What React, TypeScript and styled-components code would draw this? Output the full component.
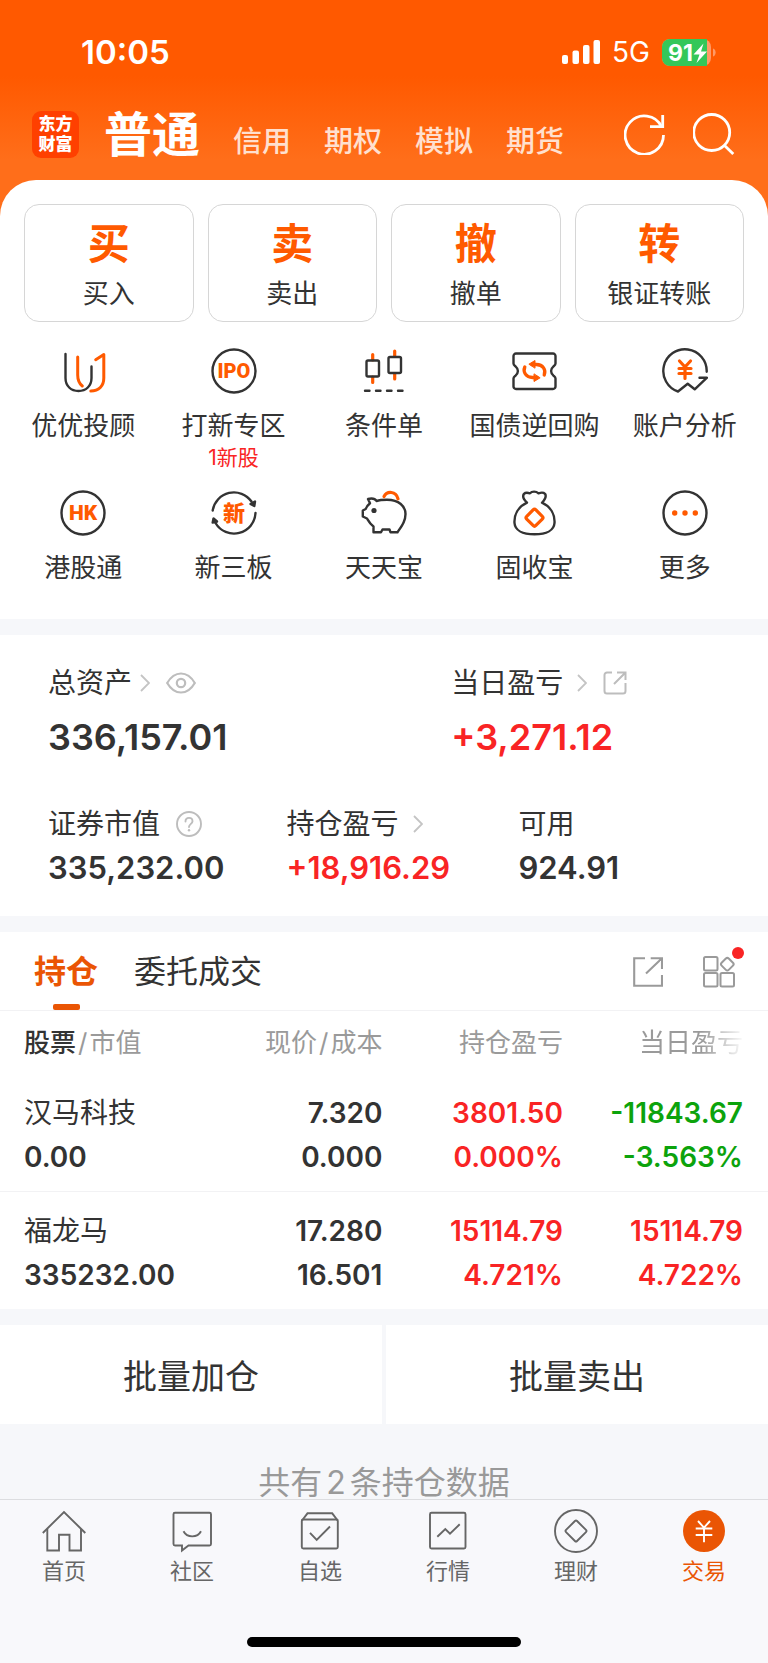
import React from "react";
import styled, { createGlobalStyle, css } from "styled-components";

const ORANGE = "#ff5a00";
const BRAND = "#ea5504";
const INK = "#333333";
const RED = "#f92424";
const GREEN = "#0ca30c";
const MUTED = "#9a9a9a";
const BAND = "#f6f7fa";

type Tone = "ink" | "up" | "down";
const tones: Record<Tone, string> = { ink: INK, up: RED, down: GREEN };

const GlobalStyle = createGlobalStyle`
  *, *::before, *::after { box-sizing: border-box; }
  body {
    margin: 0;
    background: ${BAND};
    color: ${INK};
    font-family: Inter, "Noto Sans CJK SC", sans-serif;
  }
  button {
    margin: 0;
    padding: 0;
    border: 0;
    background: none;
    color: inherit;
    font: inherit;
    cursor: pointer;
  }
  a { color: inherit; text-decoration: none; }
  h1, h2, p, dl, dd { margin: 0; font-weight: inherit; }
  svg { display: block; flex: none; }
`;

const Page = styled.div`
  display: flex;
  flex-direction: column;
  min-height: 100vh;
`;

const Header = styled.header`
  padding-bottom: 50px;
  color: #ffffff;
  background: linear-gradient(to bottom, #ff5900 76px, #ff6e1a 160px);
`;

const StatusBar = styled.div`
  display: flex;
  align-items: center;
  height: 102px;
  padding: 2px 52px 0 81px;
`;

const Clock = styled.time`
  flex: 1;
  font-size: 33px;
  font-weight: 600;
  line-height: 40px;
`;

const Network = styled.span`
  margin: 0 12px;
  font-size: 28px;
  line-height: 40px;
`;

const TitleBar = styled.div`
  display: flex;
  align-items: center;
  height: 64px;
  padding: 0 33px 0 32px;
`;

const Logo = styled.span`
  display: flex;
  align-items: center;
  justify-content: center;
  width: 47px;
  height: 47px;
  border-radius: 9px;
  background: #ff4000;
  font-size: 17px;
  font-weight: 900;
  line-height: 20px;
  text-align: center;
`;

const Accounts = styled.nav`
  display: flex;
  flex: 1;
  align-items: baseline;
  gap: 33px;
  margin-left: 25px;
  padding-top: 8px;
`;

const Account = styled.button<{ $active?: boolean }>`
  font-size: ${(p) => (p.$active ? 48 : 29)}px;
  font-weight: ${(p) => (p.$active ? 700 : 500)};
  line-height: 56px;
  color: ${(p) => (p.$active ? "#ffffff" : "#ffe0cf")};
  white-space: nowrap;
`;

const HeaderTools = styled.div`
  display: flex;
  gap: 27px;
`;

const Sheet = styled.main`
  margin-top: -36px;
`;

const Trade = styled.section`
  padding: 24px 0 33px;
  border-radius: 36px 36px 0 0;
  background: #ffffff;
`;

const TradeRow = styled.div`
  display: grid;
  grid-template-columns: repeat(4, 1fr);
  gap: 14px;
  padding: 0 24px;
`;

const TradeButton = styled.button`
  display: flex;
  flex-direction: column;
  align-items: center;
  gap: 8px;
  height: 118px;
  padding-top: 15px;
  border: 1px solid #d6d6d6;
  border-radius: 15px;
`;

const TradeGlyph = styled.span`
  color: ${ORANGE};
  font-size: 42px;
  font-weight: 700;
  line-height: 48px;
`;

const Label = styled.span`
  font-size: 26px;
  line-height: 36px;
  white-space: nowrap;
`;

const Shortcuts = styled.div`
  display: grid;
  grid-template-columns: repeat(5, 1fr);
  row-gap: 20px;
  margin-top: 26px;
  padding: 0 8px;
`;

const Shortcut = styled.a`
  display: flex;
  flex-direction: column;
  align-items: center;

  ${Label} { margin-top: 14px; }
`;

const ShortcutNote = styled.span`
  margin-top: 2px;
  color: ${RED};
  font-size: 21px;
  line-height: 24px;
`;

const Assets = styled.section`
  margin-top: 16px;
  padding: 30px 48px 28px;
  background: #ffffff;
`;

const FigureRow = styled.dl<{ $columns: string }>`
  display: grid;
  grid-template-columns: ${(p) => p.$columns};

  & + & { margin-top: 47px; }
`;

const FigureLabel = styled.dt`
  display: flex;
  align-items: center;
  font-size: 28px;
  line-height: 36px;
  white-space: nowrap;
`;

const FigureValue = styled.dd<{ $large?: boolean; $tone?: Tone }>`
  color: ${(p) => tones[p.$tone ?? "ink"]};
  font-weight: 600;
  ${(p) =>
    p.$large
      ? css`
          margin-top: 14px;
          font-size: 36px;
          line-height: 44px;
        `
      : css`
          margin-top: 6px;
          font-size: 31px;
          line-height: 40px;
        `}
`;

const IconButton = styled.button`
  display: flex;
  margin-left: 16px;
  color: #bdbdbd;
`;

const Positions = styled.section`
  margin-top: 16px;
  background: #ffffff;
`;

const TabBar = styled.div`
  display: flex;
  align-items: center;
  gap: 36px;
  height: 79px;
  padding: 0 33px 0 34px;
  border-bottom: 1px solid #f2f2f4;
`;

const Tab = styled.button<{ $active?: boolean }>`
  display: flex;
  flex-direction: column;
  align-items: center;
  align-self: stretch;
  justify-content: space-between;
  padding-top: 18px;
  color: ${(p) => (p.$active ? BRAND : INK)};
  font-size: 32px;
  font-weight: ${(p) => (p.$active ? 700 : 400)};
  line-height: 44px;

  &::after {
    content: "";
    width: 27px;
    height: 6px;
    border-radius: 2px;
    background: ${(p) => (p.$active ? BRAND : "transparent")};
  }
`;

const TabTools = styled.div`
  display: flex;
  flex: 1;
  align-items: center;
  justify-content: flex-end;
  gap: 40px;
  padding-top: 2px;
  color: ${MUTED};
`;

const ToolButton = styled.button`
  position: relative;
  display: flex;
`;

const Dot = styled.span`
  position: absolute;
  top: -9px;
  right: -9px;
  width: 12px;
  height: 12px;
  border-radius: 50%;
  background: ${RED};
`;

const Table = styled.table`
  width: 100%;
  border-collapse: collapse;
  table-layout: fixed;
`;

const HeadCell = styled.th<{ $width: string }>`
  width: ${(p) => p.$width};
  height: 62px;
  padding: 2px 0 0;
  color: ${MUTED};
  font-size: 26px;
  font-weight: 400;
  line-height: 36px;
  text-align: right;
  white-space: nowrap;

  &:first-child { padding-left: 24px; text-align: left; }
  &:last-child { padding-right: 25px; }
`;

const Strong = styled.span`
  color: ${INK};
  font-weight: 500;
`;

const Slash = styled.span`
  margin: 0 2px;
`;

const Fade = styled.span`
  mask-image: linear-gradient(to right, #000 60%, rgba(0, 0, 0, 0.1) 98%);
`;

const Cell = styled.td<{ $tone?: Tone }>`
  padding: 18px 0 12px;
  color: ${(p) => tones[p.$tone ?? "ink"]};
  font-size: 28px;
  font-weight: 600;
  line-height: 44px;
  text-align: right;
  white-space: nowrap;

  &:first-child { padding-left: 24px; text-align: left; }
  &:last-child { padding-right: 25px; }
`;

const Row = styled.tr`
  & + & { border-top: 1px solid #f2f2f4; }
  & + & > ${Cell} { padding-top: 17px; }
`;

const Line = styled.div`
  height: 44px;
`;

const StockName = styled(Line)`
  font-weight: 400;
`;

const Batch = styled.div`
  display: grid;
  grid-template-columns: 1fr 1fr;
  gap: 4px;
  margin-top: 16px;
`;

const BatchButton = styled.button`
  height: 99px;
  background: #ffffff;
  font-size: 34px;
`;

const Summary = styled.p`
  padding-top: 43px;
  color: #999999;
  font-size: 32px;
  line-height: 32px;
  text-align: center;
`;

const Count = styled.span`
  margin: 0 4px;
`;

const BottomBar = styled.footer`
  position: sticky;
  bottom: 0;
  margin-top: auto;
  padding: 9px 0 17px;
  border-top: 1px solid #dcdde0;
  background: #f8f8fb;
`;

const BottomTabs = styled.nav`
  display: grid;
  grid-template-columns: repeat(6, 1fr);
`;

const BottomTab = styled.a<{ $active?: boolean }>`
  display: flex;
  flex-direction: column;
  align-items: center;
  gap: 4px;
  color: ${(p) => (p.$active ? BRAND : "#666666")};
  font-size: 22px;
  line-height: 28px;
`;

const HomeIndicator = styled.div`
  width: 274px;
  height: 10px;
  margin: 52px auto 0;
  border-radius: 5px;
  background: #000000;
`;

/* ---------- icons ---------- */

const SignalIcon = () => (
  <svg width="38" height="24" viewBox="0 0 38 24" fill="#fff" aria-hidden="true">
    <rect x="0" y="15" width="6" height="9" rx="2" />
    <rect x="10.5" y="10.5" width="6.5" height="13.5" rx="2" />
    <rect x="21" y="5" width="6.5" height="19" rx="2" />
    <rect x="31.5" y="0" width="6.5" height="24" rx="2" />
  </svg>
);

const BatteryIcon = () => (
  <svg width="54" height="27" viewBox="0 0 54 27" role="img" aria-label="91%">
    <rect width="49" height="27" rx="8" fill="#ff9a66" />
    <path d="M8 0H45V27H8a8 8 0 0 1-8-8V8a8 8 0 0 1 8-8z" fill="#34c759" />
    <path d="M51 9.500c3.500 1 3.500 7 0 8z" fill="#ff9a66" />
    <text x="6" y="22" fill="#fff" fontFamily="Inter, sans-serif" fontSize="23" fontWeight="700">91</text>
    <path d="M41.500 4.500L31.500 15.500h6L34.500 24L45 12.500H39z" fill="#fff" />
  </svg>
);

const RefreshIcon = () => (
  <svg width="42" height="42" viewBox="0 0 42 42" fill="none" stroke="#fff" strokeWidth="2.8" aria-hidden="true">
    <path d="M39.500 22A19.200 19.200 0 1 1 37.500 13.500" />
    <path d="M38.700 2V13.700H26" />
  </svg>
);

const SearchIcon = () => (
  <svg width="42" height="42" viewBox="0 0 42 42" fill="none" stroke="#fff" strokeWidth="2.8" aria-hidden="true">
    <circle cx="18.700" cy="19.500" r="18" />
    <path d="M31 32L40.300 41" />
  </svg>
);

const Pictogram = ({ children }: { children: React.ReactNode }) => (
  <svg width="46" height="46" viewBox="0 0 46 46" fill="none" stroke={INK} strokeWidth="2.4" strokeLinecap="round" strokeLinejoin="round" aria-hidden="true">
    {children}
  </svg>
);

const AdviserIcon = () => (
  <Pictogram>
    <path d="M5.500 6V30c0 8 5.500 13 13 13s13-5 13-13V18.500" />
    <g stroke={ORANGE} strokeWidth="3">
      <path d="M17.700 9V27c0 5 1.500 8.500 4.600 11" />
      <path d="M35.700 11.700L43.800 6.500V30c0 8-5 13-13 13" />
    </g>
  </Pictogram>
);

const RingText = ({ text, size }: { text: string; size: number }) => (
  <text x="23" y="30.300" textAnchor="middle" fontFamily="Roboto, sans-serif" fontSize={size} fontWeight="900" fill={ORANGE} stroke="none">{text}</text>
);

const IpoIcon = () => (
  <Pictogram>
    <circle cx="23" cy="23" r="21.500" />
    <RingText text="IPO" size={20} />
  </Pictogram>
);

const HkIcon = () => (
  <Pictogram>
    <circle cx="23" cy="23" r="21.500" />
    <RingText text="HK" size={21} />
  </Pictogram>
);

const CandleIcon = () => (
  <Pictogram>
    <g stroke={ORANGE} strokeWidth="3.200">
      <path d="M11.700 6.500V12M11.700 29V34.500M33.700 3V8.500M33.700 25.500V31" />
    </g>
    <rect x="5.500" y="12.500" width="12.500" height="16" rx="1.500" />
    <rect x="27.500" y="9" width="12.500" height="16" rx="1.500" />
    <path d="M4 42.700h4.500M15 42.700h4.500M26 42.700h4.500M37 42.700h4.500" />
  </Pictogram>
);

const BondIcon = () => (
  <Pictogram>
    <path d="M5 5.500H42a2.500 2.500 0 0 1 2.500 2.500V15.500C44.500 17 43.500 17.500 42.500 18.300C39.300 21 39.300 25 42.500 27.700C43.500 28.500 44.500 29 44.500 30.500V38.500a2.500 2.500 0 0 1-2.500 2.500H5a2.500 2.500 0 0 1-2.500-2.500V30.500C2.500 29 3.500 28.500 4.500 27.700C7.700 25 7.700 21 4.500 18.300C3.500 17.500 2.500 17 2.500 15.500V8A2.500 2.500 0 0 1 5 5.500z" />
    <g stroke={ORANGE} strokeWidth="3.300">
      <path d="M21 16.500h4.500c6.500 0 9.800 5.500 7.700 10.500" />
      <path d="M26 29.500h-4.500c-6.500 0-9.800-5.500-7.700-10.500" />
    </g>
    <path d="M18.200 16L24 12.500V19.800zM28.800 30L23 33.500V26.200z" fill={ORANGE} stroke={ORANGE} strokeWidth="1" />
  </Pictogram>
);

const AnalysisIcon = () => (
  <Pictogram>
    <path d="M44.700 23.700A21.700 21.700 0 1 0 16 43.500L25.700 35.700L32.700 41.300L45 29.700H37.500" />
    <path d="M17.500 13L23 19L28.500 13M23 19V30.500M17 20.500H29M17 25.500H29" stroke={ORANGE} strokeWidth="3.200" />
  </Pictogram>
);

const BoardIcon = () => (
  <Pictogram>
    <path d="M1.700 20.500A21.500 21.500 0 0 1 40.500 11.500M44.500 23A21.500 21.500 0 0 1 4.500 33" />
    <path d="M44 11.500L43.300 16L39.500 14zM2.500 28.500L1.700 32.500L6 31.500z" fill={INK} />
    <text x="23" y="31" textAnchor="middle" fontFamily='"Noto Sans CJK SC", sans-serif' fontSize="22" fontWeight="900" fill={ORANGE} stroke="none">新</text>
  </Pictogram>
);

const PiggyIcon = () => (
  <Pictogram>
    <path d="M7 9C10 8.300 14 8.500 15.500 11C19 9.800 22 9.800 26 9.800C38 10 44.500 16 44.500 24C44.500 31 41 35.500 36.500 42.300H29.500L28.500 39.500H21.500L20 42.300H12.500V36.500C9 34 7.500 31 6 28.500L1.800 26.500V20.500L4.700 19C5.500 16.500 7 14.800 9 13.200z" />
    <circle cx="13" cy="20.500" r="2.600" fill={INK} stroke="none" />
    <path d="M23 6.500C26 .8 35 .8 37 8.800" stroke={ORANGE} strokeWidth="3.200" />
  </Pictogram>
);

const BagIcon = () => (
  <Pictogram>
    <path d="M16 12.700C12.500 9.500 11.500 6 13 3.800C14.500 2.300 17 2.700 19 3.300C21 1 25 1 27.500 3.300C30 2.500 32.500 2.300 34 3.800C35.500 6 34 9.500 31 12.700C40 17 44 25 43.500 33C43 40 36 44.300 23.500 44.300S4 40 3.500 33C3 25 7 17 16 12.700z" />
    <rect x="17" y="21.200" width="13" height="13" rx="2" transform="rotate(45 23.500 27.700)" stroke={ORANGE} strokeWidth="3.200" />
  </Pictogram>
);

const MoreIcon = () => (
  <Pictogram>
    <circle cx="23" cy="23" r="21.500" />
    <g fill={ORANGE} stroke="none">
      <circle cx="12.700" cy="23" r="2.700" />
      <circle cx="23" cy="23" r="2.700" />
      <circle cx="33.300" cy="23" r="2.700" />
    </g>
  </Pictogram>
);

const ChevronIcon = ({ gap }: { gap: number }) => (
  <svg width={10 + gap} height="18" viewBox={`${-gap} 0 ${10 + gap} 18`} fill="none" stroke="#c4c4c4" strokeWidth="1.800" aria-hidden="true">
    <path d="M1 1L9 9L1 17" />
  </svg>
);

const EyeIcon = () => (
  <svg width="30" height="22" viewBox="0 0 30 22" fill="none" stroke="currentColor" strokeWidth="2.200" aria-hidden="true">
    <path d="M1.200 11C5 4.500 9.500 1.500 15 1.500S25 4.500 28.800 11C25 17.500 20.500 20.500 15 20.500S5 17.500 1.200 11z" />
    <circle cx="15" cy="11" r="4.200" />
  </svg>
);

const HelpIcon = () => (
  <svg width="26" height="26" viewBox="0 0 26 26" fill="none" stroke="currentColor" strokeWidth="1.900" strokeLinecap="round" aria-hidden="true">
    <circle cx="13" cy="13" r="12" />
    <path d="M9.500 10.500C9.500 5.500 16.500 5.800 16.500 10.200C16.500 12.800 13 13 13 16" />
    <circle cx="13" cy="19.200" r="1.200" fill="currentColor" stroke="none" />
  </svg>
);

const SmallShareIcon = () => (
  <svg width="24" height="24" viewBox="0 0 24 24" fill="none" stroke="currentColor" strokeWidth="2" aria-hidden="true">
    <path d="M9 1.500H4A2.500 2.500 0 0 0 1.500 4V20A2.500 2.500 0 0 0 4 22.500H20A2.500 2.500 0 0 0 22.500 20V12" />
    <path d="M14 1.500H22.500V9M22.500 1.500L11 13" />
  </svg>
);

const ShareIcon = () => (
  <svg width="30" height="30" viewBox="0 0 30 30" fill="none" stroke="currentColor" strokeWidth="2.100" aria-hidden="true">
    <path d="M12 1.300H1.200V28.700H29V18M17.700 1.300H29V12M13 16.500L29 1.300" />
  </svg>
);

const WidgetsIcon = () => (
  <svg width="32" height="32" viewBox="0 0 32 32" fill="none" stroke="currentColor" strokeWidth="2" aria-hidden="true">
    <rect x="1" y="1" width="13.500" height="13.500" rx="1.500" />
    <rect x="1" y="17" width="13.500" height="13.500" rx="1.500" />
    <rect x="17.500" y="17" width="13.500" height="13.500" rx="1.500" />
    <rect x="19.300" y="3.200" width="10" height="10" rx="2" transform="rotate(45 24.300 8.200)" />
  </svg>
);

const NavGlyph = ({ children }: { children: React.ReactNode }) => (
  <svg width="44" height="44" viewBox="0 0 44 44" fill="none" stroke="currentColor" strokeWidth="1.900" aria-hidden="true">
    {children}
  </svg>
);

const HomeIcon = () => (
  <NavGlyph>
    <path d="M.8 24L22 3L43.300 24" />
    <path d="M5.300 20V41.500H17V25.700H27.500V41.500H39V20" />
  </NavGlyph>
);

const CommunityIcon = () => (
  <NavGlyph>
    <path d="M5 3.700H39.500a1.500 1.500 0 0 1 1.500 1.500V35a1.500 1.500 0 0 1-1.500 1.500H18.500L12 41.500V36.500H5A1.500 1.500 0 0 1 3.500 35V5.200A1.500 1.500 0 0 1 5 3.700z" />
    <path d="M13.500 22.300C17 29 27.500 29 31 22.300" />
  </NavGlyph>
);

const WatchlistIcon = () => (
  <NavGlyph>
    <rect x="3.800" y="10.500" width="36" height="29" rx="1.500" />
    <path d="M4 11.500L9.500 4.300H34.200L39.700 11.500M12 23.800L18.700 31L32 17.500" />
  </NavGlyph>
);

const MarketIcon = () => (
  <NavGlyph>
    <rect x="4" y="3.700" width="35.500" height="35.800" rx="1.500" />
    <path d="M11.300 27.700L19.300 20L24 24.700L33.700 15.300" />
  </NavGlyph>
);

const WealthIcon = () => (
  <NavGlyph>
    <circle cx="22" cy="22" r="21" />
    <rect x="14.200" y="14.200" width="15.600" height="15.600" rx="1.500" transform="rotate(45 22 22)" />
  </NavGlyph>
);

const TradeIcon = () => (
  <NavGlyph>
    <circle cx="22" cy="22" r="21" fill="currentColor" stroke="none" />
    <path d="M16 12L22 18.700L28 12M22 18.700V33.200M13.700 19.500H30.300M13.700 26H30.300" stroke="#fff" />
  </NavGlyph>
);

/* ---------- data ---------- */

const tradeActions = [
  ["买", "买入"],
  ["卖", "卖出"],
  ["撤", "撤单"],
  ["转", "银证转账"],
];

const shortcuts: { label: string; icon: React.ReactNode; note?: string }[] = [
  { label: "优优投顾", icon: <AdviserIcon /> },
  { label: "打新专区", icon: <IpoIcon />, note: "1新股" },
  { label: "条件单", icon: <CandleIcon /> },
  { label: "国债逆回购", icon: <BondIcon /> },
  { label: "账户分析", icon: <AnalysisIcon /> },
  { label: "港股通", icon: <HkIcon /> },
  { label: "新三板", icon: <BoardIcon /> },
  { label: "天天宝", icon: <PiggyIcon /> },
  { label: "固收宝", icon: <BagIcon /> },
  { label: "更多", icon: <MoreIcon /> },
];

const holdings: {
  name: string;
  value: string;
  cells: [string, string, Tone][];
}[] = [
  {
    name: "汉马科技",
    value: "0.00",
    cells: [
      ["7.320", "0.000", "ink"],
      ["3801.50", "0.000%", "up"],
      ["-11843.67", "-3.563%", "down"],
    ],
  },
  {
    name: "福龙马",
    value: "335232.00",
    cells: [
      ["17.280", "16.501", "ink"],
      ["15114.79", "4.721%", "up"],
      ["15114.79", "4.722%", "up"],
    ],
  },
];

const bottomTabs: { label: string; icon: React.ReactNode }[] = [
  { label: "首页", icon: <HomeIcon /> },
  { label: "社区", icon: <CommunityIcon /> },
  { label: "自选", icon: <WatchlistIcon /> },
  { label: "行情", icon: <MarketIcon /> },
  { label: "理财", icon: <WealthIcon /> },
  { label: "交易", icon: <TradeIcon /> },
];

export default function App() {
  return (
    <Page>
      <GlobalStyle />
      <Header>
        <StatusBar>
          <Clock>10:05</Clock>
          <SignalIcon />
          <Network>5G</Network>
          <BatteryIcon />
        </StatusBar>
        <TitleBar>
          <Logo>
            东方
            <br />
            财富
          </Logo>
          <Accounts>
            <Account $active>普通</Account>
            {["信用", "期权", "模拟", "期货"].map((name) => (
              <Account key={name}>{name}</Account>
            ))}
          </Accounts>
          <HeaderTools>
            <button aria-label="刷新"><RefreshIcon /></button>
            <button aria-label="搜索"><SearchIcon /></button>
          </HeaderTools>
        </TitleBar>
      </Header>

      <Sheet>
        <Trade>
          <TradeRow>
            {tradeActions.map(([glyph, label]) => (
              <TradeButton key={label}>
                <TradeGlyph>{glyph}</TradeGlyph>
                <Label>{label}</Label>
              </TradeButton>
            ))}
          </TradeRow>
          <Shortcuts>
            {shortcuts.map((item) => (
              <Shortcut key={item.label} href="#">
                {item.icon}
                <Label>{item.label}</Label>
                {item.note && <ShortcutNote>{item.note}</ShortcutNote>}
              </Shortcut>
            ))}
          </Shortcuts>
        </Trade>

        <Assets>
          <FigureRow $columns="60% 40%">
            <div>
              <FigureLabel>
                总资产
                <ChevronIcon gap={8} />
                <IconButton aria-label="显示或隐藏金额"><EyeIcon /></IconButton>
              </FigureLabel>
              <FigureValue $large>336,157.01</FigureValue>
            </div>
            <div>
              <FigureLabel>
                当日盈亏
                <ChevronIcon gap={14} />
                <IconButton aria-label="分享当日盈亏"><SmallShareIcon /></IconButton>
              </FigureLabel>
              <FigureValue $large $tone="up">+3,271.12</FigureValue>
            </div>
          </FigureRow>
          <FigureRow $columns="35.5% 34.5% 30%">
            <div>
              <FigureLabel>
                证券市值
                <IconButton aria-label="说明"><HelpIcon /></IconButton>
              </FigureLabel>
              <FigureValue>335,232.00</FigureValue>
            </div>
            <div>
              <FigureLabel>
                持仓盈亏
                <ChevronIcon gap={14} />
              </FigureLabel>
              <FigureValue $tone="up">+18,916.29</FigureValue>
            </div>
            <div>
              <FigureLabel>可用</FigureLabel>
              <FigureValue>924.91</FigureValue>
            </div>
          </FigureRow>
        </Assets>

        <Positions>
          <TabBar>
            <Tab $active>持仓</Tab>
            <Tab>委托成交</Tab>
            <TabTools>
              <ToolButton aria-label="分享"><ShareIcon /></ToolButton>
              <ToolButton aria-label="布局">
                <WidgetsIcon />
                <Dot />
              </ToolButton>
            </TabTools>
          </TabBar>
          <Table>
            <thead>
              <tr>
                <HeadCell scope="col" $width="26.3%"><Strong>股票</Strong><Slash>/</Slash>市值</HeadCell>
                <HeadCell scope="col" $width="23.5%">现价<Slash>/</Slash>成本</HeadCell>
                <HeadCell scope="col" $width="23.5%">持仓盈亏</HeadCell>
                <HeadCell scope="col" $width="26.7%"><Fade>当日盈亏</Fade></HeadCell>
              </tr>
            </thead>
            <tbody>
              {holdings.map((stock) => (
                <Row key={stock.name}>
                  <Cell>
                    <StockName>{stock.name}</StockName>
                    <Line>{stock.value}</Line>
                  </Cell>
                  {stock.cells.map(([top, bottom, tone], i) => (
                    <Cell key={i} $tone={tone}>
                      <Line>{top}</Line>
                      <Line>{bottom}</Line>
                    </Cell>
                  ))}
                </Row>
              ))}
            </tbody>
          </Table>
        </Positions>

        <Batch>
          <BatchButton>批量加仓</BatchButton>
          <BatchButton>批量卖出</BatchButton>
        </Batch>
        <Summary>共有<Count>2</Count>条持仓数据</Summary>
      </Sheet>

      <BottomBar>
        <BottomTabs>
          {bottomTabs.map((tab) => (
            <BottomTab key={tab.label} href="#" $active={tab.label === "交易"}>
              {tab.icon}
              {tab.label}
            </BottomTab>
          ))}
        </BottomTabs>
        <HomeIndicator />
      </BottomBar>
    </Page>
  );
}
